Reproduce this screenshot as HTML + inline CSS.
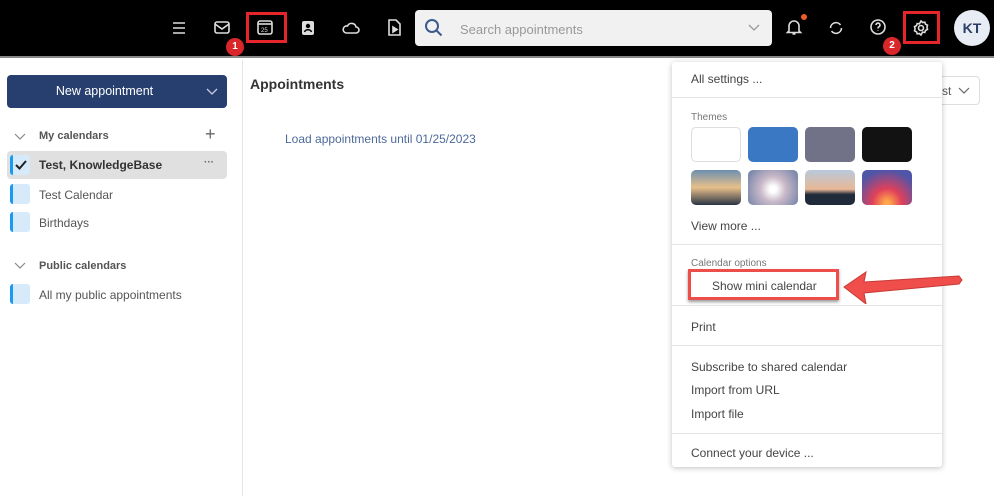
<!DOCTYPE html><html><head><style>
*{box-sizing:border-box;margin:0;padding:0}
body{width:994px;height:496px;background:#fff;font-family:"Liberation Sans",sans-serif;position:relative;overflow:hidden;color:#333}
.top{position:absolute;left:0;top:0;width:994px;height:58px;background:#000;border-bottom:2px solid #888}
.ab{position:absolute}
.ic{position:absolute;stroke:#ddd;fill:none;stroke-width:1.6}
.red{position:absolute;border:3px solid #e5252a}
.badge{position:absolute;width:18px;height:18px;border-radius:50%;background:#d9262b;color:#fff;font-size:10px;font-weight:bold;text-align:center;line-height:18px}
.side{position:absolute;left:0;top:60px;width:243px;height:436px;border-right:1px solid #e5e5e5}
.t{position:absolute;font-size:12px;white-space:nowrap}
.sw{position:absolute;left:10px;width:20px;height:20px;background:#d6eafa;border-left:3px solid #1a9bf0;border-radius:3px}
.menu{position:absolute;left:672px;top:62px;width:270px;height:405px;background:#fff;box-shadow:0 1px 6px rgba(0,0,0,.25);border-radius:3px}
.hr{position:absolute;left:0;width:270px;height:1px;background:#e5e5e5}
.th{position:absolute;width:50px;height:35px;border-radius:5px}
</style></head><body>
<div class="top"></div>
<svg class="ic" style="left:171px;top:20px" width="16" height="16"><path d="M2 3h12M2 8h12M2 13h12"/></svg>
<svg class="ic" style="left:213px;top:20px" width="18" height="16"><rect x="2" y="2" width="14" height="11" rx="2"/><path d="M2 4l7 5 7-5"/></svg>
<svg class="ic" style="left:256px;top:18px" width="18" height="18"><rect x="2" y="3" width="14" height="13" rx="2"/><path d="M2 6h14"/><text x="5" y="14" font-size="6" fill="#ddd" stroke="none">25</text></svg>
<div class="red" style="left:246px;top:12px;width:41px;height:31px"></div>
<div class="badge" style="left:226px;top:38px">1</div>
<svg class="ic" style="left:299px;top:19px" width="18" height="18"><rect x="3" y="2" width="12" height="14" rx="2" fill="#ddd" stroke="none"/><circle cx="9" cy="7" r="2.2" fill="#000" stroke="none"/><path d="M5.5 13c1-3 6-3 7 0" stroke="#000"/></svg>
<svg class="ic" style="left:341px;top:20px" width="20" height="16"><path d="M5 13h10a3 3 0 0 0 0-6 4.5 4.5 0 0 0-8.5-1A3.5 3.5 0 0 0 5 13z"/></svg>
<svg class="ic" style="left:386px;top:18px" width="16" height="20"><path d="M3 2h7l4 4v11H3z"/><path d="M7 9l4 2.5-4 2.5z" fill="#ddd"/></svg>
<div class="ab" style="left:415px;top:10px;width:357px;height:36px;background:#f1f1f1;border-radius:4px"></div>
<svg class="ab" style="left:424px;top:18px" width="20" height="20" fill="none" stroke="#3c5a8c" stroke-width="2"><circle cx="8" cy="8" r="6"/><path d="M12.5 12.5l5 5"/></svg>
<div class="t" style="left:460px;top:22px;font-size:13px;color:#999">Search appointments</div>
<svg class="ab" style="left:748px;top:24px" width="12" height="8" fill="none" stroke="#999" stroke-width="1.3"><path d="M1 1l5 5 5-5"/></svg>
<svg class="ic" style="left:785px;top:17px" width="18" height="20"><path d="M4 14V9a5 5 0 0 1 10 0v5l1.5 1.5h-13zM7.5 17h3"/></svg>
<div class="ab" style="left:801px;top:14px;width:6px;height:6px;border-radius:50%;background:#f05a28"></div>
<svg class="ic" style="left:827px;top:19px" width="18" height="18"><path d="M3.5 9a5.5 5.5 0 0 1 10-3M14.5 9a5.5 5.5 0 0 1-10 3"/></svg>
<svg class="ic" style="left:869px;top:18px" width="18" height="18"><circle cx="9" cy="9" r="7"/><path d="M7 7a2 2 0 1 1 2.5 2c-.5.3-.5.7-.5 1.5M9 12.5v.5"/></svg>
<svg class="ic" style="left:911px;top:18px" width="20" height="20"><circle cx="10" cy="10" r="2.5"/><path d="M10 3l1.6 1.5 2.2-.4.7 2.1 2 1-.6 2.1.6 2.1-2 1-.7 2.1-2.2-.4L10 17l-1.6-1.5-2.2.4-.7-2.1-2-1 .6-2.1-.6-2.1 2-1 .7-2.1 2.2.4z"/></svg>
<div class="red" style="left:903px;top:11px;width:37px;height:33px"></div>
<div class="badge" style="left:883px;top:37px">2</div>
<div class="ab" style="left:954px;top:10px;width:36px;height:36px;border-radius:50%;background:#e8ecf5;color:#2b3d66;font-weight:bold;font-size:14px;text-align:center;line-height:36px">KT</div>

<div class="side">
<div class="ab" style="left:7px;top:15px;width:220px;height:33px;background:#263f6e;border-radius:4px;color:#fff;font-size:12.5px;text-align:center;line-height:33px;padding-right:25px">New appointment</div>
<svg class="ab" style="left:206px;top:28px" width="12" height="8" fill="none" stroke="#ccd" stroke-width="1.3"><path d="M1 1l5 5 5-5"/></svg>
<svg class="ab" style="left:14px;top:73px" width="12" height="8" fill="none" stroke="#888" stroke-width="1.2"><path d="M1 1l5 5 5-5"/></svg>
<div class="t" style="left:39px;top:70px;font-size:11px;font-weight:bold;color:#555">My calendars</div>
<div class="t" style="left:205px;top:64px;font-size:18px;color:#666">+</div>
<div class="ab" style="left:7px;top:91px;width:220px;height:28px;background:#e0e0e0;border-radius:4px"></div>
<div class="sw" style="top:95px"></div>
<svg class="ab" style="left:15px;top:100px" width="12" height="10" fill="none" stroke="#222" stroke-width="2"><path d="M1 5l3.5 3.5L11 1"/></svg>
<div class="t" style="left:39px;top:98px;font-weight:bold;color:#333">Test, KnowledgeBase</div>
<div class="t" style="left:204px;top:97px;color:#666;font-weight:bold;font-size:10px">···</div>
<div class="sw" style="top:124px"></div>
<div class="t" style="left:39px;top:128px;color:#555">Test Calendar</div>
<div class="sw" style="top:152px"></div>
<div class="t" style="left:39px;top:156px;color:#555">Birthdays</div>
<svg class="ab" style="left:14px;top:202px" width="12" height="8" fill="none" stroke="#888" stroke-width="1.2"><path d="M1 1l5 5 5-5"/></svg>
<div class="t" style="left:39px;top:200px;font-size:11px;font-weight:bold;color:#555">Public calendars</div>
<div class="sw" style="top:224px"></div>
<div class="t" style="left:39px;top:228px;color:#555">All my public appointments</div>
</div>

<div class="t" style="left:250px;top:76px;font-size:14px;font-weight:bold;color:#333">Appointments</div>
<div class="t" style="left:285px;top:132px;color:#4d6a9c">Load appointments until 01/25/2023</div>
<div class="ab" style="left:900px;top:76px;width:80px;height:29px;border:1px solid #ddd;border-radius:4px"></div>
<div class="t" style="left:942px;top:84px;color:#555">st</div>
<svg class="ab" style="left:958px;top:87px" width="12" height="8" fill="none" stroke="#666" stroke-width="1.2"><path d="M1 1l5 5 5-5"/></svg>

<div class="menu">
<div class="t" style="left:19px;top:10px;color:#444">All settings ...</div>
<div class="hr" style="top:35px"></div>
<div class="t" style="left:19px;top:50px;font-size:10px;color:#777">Themes</div>
<div class="th" style="left:19px;top:65px;border:1px solid #ddd"></div>
<div class="th" style="left:76px;top:65px;background:#3b78c3"></div>
<div class="th" style="left:133px;top:65px;background:#717187"></div>
<div class="th" style="left:190px;top:65px;background:#121212"></div>
<div class="th" style="left:19px;top:108px;background:linear-gradient(#6d8fb0,#e8c08a 50%,#2a3445)"></div>
<div class="th" style="left:76px;top:108px;background:radial-gradient(circle at 50% 55%,#fff 10%,#c9b9c8 40%,#6a7da6)"></div>
<div class="th" style="left:133px;top:108px;background:linear-gradient(#b8c9dc,#e9b896 55%,#1f2a3a 70%)"></div>
<div class="th" style="left:190px;top:108px;background:radial-gradient(circle at 50% 95%,#ffa84a 5%,#e0405a 35%,#4f55a8 80%)"></div>
<div class="t" style="left:19px;top:157px;color:#444">View more ...</div>
<div class="hr" style="top:182px"></div>
<div class="t" style="left:19px;top:196px;font-size:10px;color:#777">Calendar options</div>
<div class="ab" style="left:16px;top:207px;width:151px;height:31px;border:3px solid #ee4e4a;box-shadow:0 2px 3px rgba(0,0,0,.4)"></div>
<div class="t" style="left:40px;top:217px;color:#444">Show mini calendar</div>
<div class="hr" style="top:243px"></div>
<div class="t" style="left:19px;top:258px;color:#444">Print</div>
<div class="hr" style="top:283px"></div>
<div class="t" style="left:19px;top:298px;color:#444">Subscribe to shared calendar</div>
<div class="t" style="left:19px;top:321px;color:#444">Import from URL</div>
<div class="t" style="left:19px;top:345px;color:#444">Import file</div>
<div class="hr" style="top:371px"></div>
<div class="t" style="left:19px;top:384px;color:#444">Connect your device ...</div>
</div>
<svg class="ab" style="left:840px;top:268px" width="125" height="36"><path d="M4 19L26 4l-2 10 95-6 3 4-3 4-95 9 2 11z" fill="#f04e4a" stroke="#c83a36" stroke-width="1"/></svg>
</body></html>
